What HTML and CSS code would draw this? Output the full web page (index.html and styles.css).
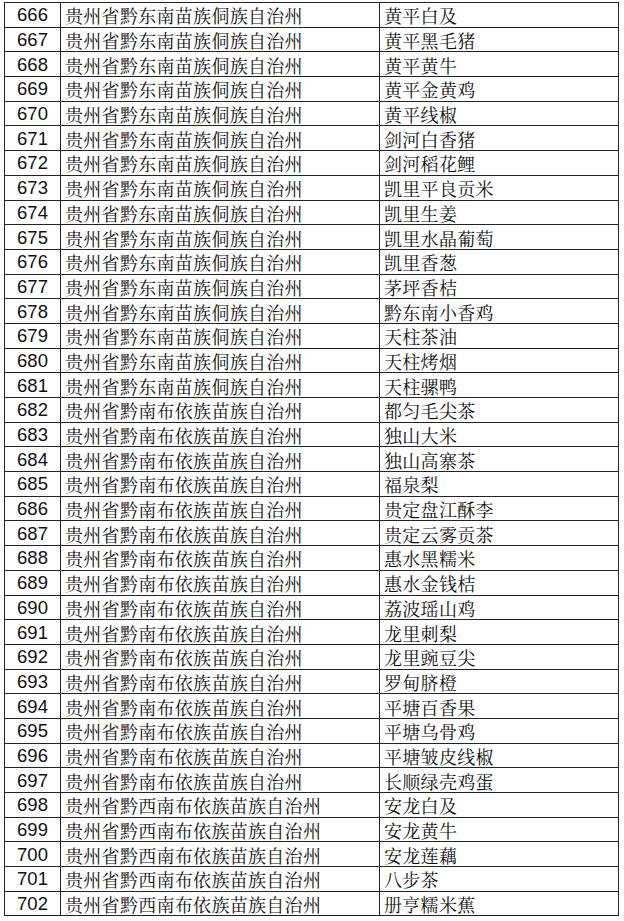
FILE: index.html
```html
<!DOCTYPE html>
<html lang="zh">
<head>
<meta charset="utf-8">
<link rel="stylesheet" href="styles.css">
</head>
<body>
<table class="list">
<colgroup><col class="c-no"><col class="c-area"><col class="c-name"></colgroup>
<tbody>
<tr><td class="no">666</td><td>贵州省黔东南苗族侗族自治州</td><td>黄平白及</td></tr>
<tr><td class="no">667</td><td>贵州省黔东南苗族侗族自治州</td><td>黄平黑毛猪</td></tr>
<tr><td class="no">668</td><td>贵州省黔东南苗族侗族自治州</td><td>黄平黄牛</td></tr>
<tr><td class="no">669</td><td>贵州省黔东南苗族侗族自治州</td><td>黄平金黄鸡</td></tr>
<tr><td class="no">670</td><td>贵州省黔东南苗族侗族自治州</td><td>黄平线椒</td></tr>
<tr><td class="no">671</td><td>贵州省黔东南苗族侗族自治州</td><td>剑河白香猪</td></tr>
<tr><td class="no">672</td><td>贵州省黔东南苗族侗族自治州</td><td>剑河稻花鲤</td></tr>
<tr><td class="no">673</td><td>贵州省黔东南苗族侗族自治州</td><td>凯里平良贡米</td></tr>
<tr><td class="no">674</td><td>贵州省黔东南苗族侗族自治州</td><td>凯里生姜</td></tr>
<tr><td class="no">675</td><td>贵州省黔东南苗族侗族自治州</td><td>凯里水晶葡萄</td></tr>
<tr><td class="no">676</td><td>贵州省黔东南苗族侗族自治州</td><td>凯里香葱</td></tr>
<tr><td class="no">677</td><td>贵州省黔东南苗族侗族自治州</td><td>茅坪香桔</td></tr>
<tr><td class="no">678</td><td>贵州省黔东南苗族侗族自治州</td><td>黔东南小香鸡</td></tr>
<tr><td class="no">679</td><td>贵州省黔东南苗族侗族自治州</td><td>天柱茶油</td></tr>
<tr><td class="no">680</td><td>贵州省黔东南苗族侗族自治州</td><td>天柱烤烟</td></tr>
<tr><td class="no">681</td><td>贵州省黔东南苗族侗族自治州</td><td>天柱骡鸭</td></tr>
<tr><td class="no">682</td><td>贵州省黔南布依族苗族自治州</td><td>都匀毛尖茶</td></tr>
<tr><td class="no">683</td><td>贵州省黔南布依族苗族自治州</td><td>独山大米</td></tr>
<tr><td class="no">684</td><td>贵州省黔南布依族苗族自治州</td><td>独山高寨茶</td></tr>
<tr><td class="no">685</td><td>贵州省黔南布依族苗族自治州</td><td>福泉梨</td></tr>
<tr><td class="no">686</td><td>贵州省黔南布依族苗族自治州</td><td>贵定盘江酥李</td></tr>
<tr><td class="no">687</td><td>贵州省黔南布依族苗族自治州</td><td>贵定云雾贡茶</td></tr>
<tr><td class="no">688</td><td>贵州省黔南布依族苗族自治州</td><td>惠水黑糯米</td></tr>
<tr><td class="no">689</td><td>贵州省黔南布依族苗族自治州</td><td>惠水金钱桔</td></tr>
<tr><td class="no">690</td><td>贵州省黔南布依族苗族自治州</td><td>荔波瑶山鸡</td></tr>
<tr><td class="no">691</td><td>贵州省黔南布依族苗族自治州</td><td>龙里刺梨</td></tr>
<tr><td class="no">692</td><td>贵州省黔南布依族苗族自治州</td><td>龙里豌豆尖</td></tr>
<tr><td class="no">693</td><td>贵州省黔南布依族苗族自治州</td><td>罗甸脐橙</td></tr>
<tr><td class="no">694</td><td>贵州省黔南布依族苗族自治州</td><td>平塘百香果</td></tr>
<tr><td class="no">695</td><td>贵州省黔南布依族苗族自治州</td><td>平塘乌骨鸡</td></tr>
<tr><td class="no">696</td><td>贵州省黔南布依族苗族自治州</td><td>平塘皱皮线椒</td></tr>
<tr><td class="no">697</td><td>贵州省黔南布依族苗族自治州</td><td>长顺绿壳鸡蛋</td></tr>
<tr><td class="no">698</td><td>贵州省黔西南布依族苗族自治州</td><td>安龙白及</td></tr>
<tr><td class="no">699</td><td>贵州省黔西南布依族苗族自治州</td><td>安龙黄牛</td></tr>
<tr><td class="no">700</td><td>贵州省黔西南布依族苗族自治州</td><td>安龙莲藕</td></tr>
<tr><td class="no">701</td><td>贵州省黔西南布依族苗族自治州</td><td>八步茶</td></tr>
<tr><td class="no">702</td><td>贵州省黔西南布依族苗族自治州</td><td>册亨糯米蕉</td></tr>
</tbody>
</table>
</body>
</html>
```
FILE: styles.css
```css
html, body {
  margin: 0;
  padding: 0;
  background: #ffffff;
}

body {
  padding: 2px 0 0 4px;
}

.list {
  border-collapse: collapse;
  table-layout: fixed;
  width: 614px;
  font-family: "Noto Serif CJK SC", "Noto Sans CJK SC", serif;
  font-size: 18px;
  letter-spacing: 0.3px;
  color: #111;
}

.c-no { width: 56px; }
.c-area { width: 319px; }
.c-name { width: 239px; }

.list tr {
  height: 24.7px;
}

.list td {
  border: 1px solid #222;
  padding: 1px 0 0 4px;
  line-height: 20px;
  white-space: nowrap;
  overflow: hidden;
  vertical-align: middle;
}

.list td.no {
  padding: 1px 0 0 0;
  text-align: center;
  font-family: "Liberation Sans", Arial, sans-serif;
  font-size: 18.5px;
  letter-spacing: 0;
}
```
